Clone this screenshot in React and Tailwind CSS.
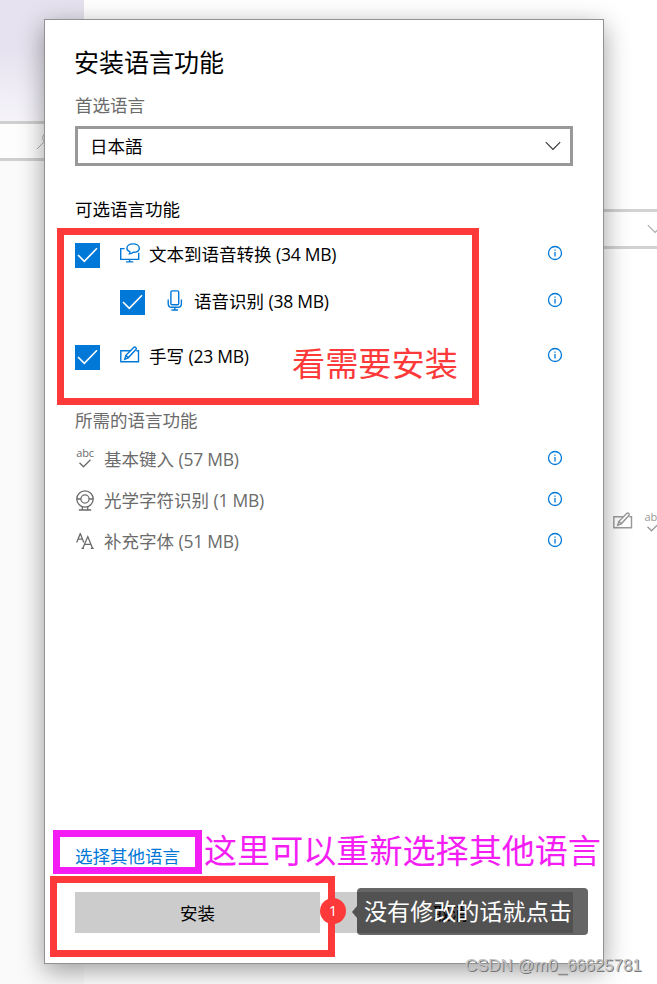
import React from "react";
import clsx from "clsx";

const optionalFeatures = [
  { title: "文本到语音转换", size: "(34 MB)", icon: SpeechIcon, className: "mt-[21px]" },
  { title: "语音识别", size: "(38 MB)", icon: MicIcon, className: "mt-[21px] pl-[45px]" },
  { title: "手写", size: "(23 MB)", icon: PenIcon, className: "mt-[29px]" },
];

const requiredFeatures = [
  { title: "基本键入", size: "(57 MB)", icon: TypingIcon },
  { title: "光学字符识别", size: "(1 MB)", icon: CameraIcon },
  { title: "补充字体", size: "(51 MB)", icon: FontsIcon },
];

function SpeechIcon() {
  return (
    <svg width="20" height="20" viewBox="0 0 20 20" fill="none" stroke="currentColor" strokeWidth="1.4">
      <path d="M4.600 5.600H.7v10.800h18V9.800M9.600 16.500v2.300M6 18.900h7.300" />
      <path d="M9.400 10.900c.5-.9.6-1.400.4-2.300C7.900 7.900 6.900 6.800 6.900 5.200c0-2.600 2.700-4.300 6.200-4.300s6.200 1.700 6.200 4.300-2.700 4.100-5.900 4.100c-1.200 1-2.400 1.600-4 1.600Z" />
    </svg>
  );
}

function MicIcon() {
  return (
    <svg width="16" height="21" viewBox="0 0 16 21" fill="none" stroke="currentColor" strokeWidth="1.4">
      <rect x="3.9" y=".9" width="7.8" height="13.8" rx="1.2" />
      <path d="M1.200 9.500v4.200c0 2.300 1.300 3.500 3.500 3.500h6.200c2.200 0 3.500-1.200 3.500-3.500V9.500M7.800 17.200v2.600M4.500 20h6.600" />
    </svg>
  );
}

function PenIcon() {
  return (
    <svg width="20" height="18" viewBox="0 0 20 18" fill="none" stroke="currentColor" strokeWidth="1.4">
      <path d="M10.500 4.700H.8v11h17.700v-11h-2.200" />
      <path d="m4.700 13.300 1.200-4L13.700 1.500c1.300-1.200 3.400.6 2.200 2L8.200 11.800Zm1.200-4 2.300 2.500" />
    </svg>
  );
}

function TypingIcon() {
  return (
    <span className="flex flex-col items-center">
      <span className="-mt-1 font-['Open_Sans',sans-serif] text-[11px] leading-[12px] tracking-[-0.2px]">abc</span>
      <svg width="14" height="9" viewBox="0 0 14 9" fill="none" stroke="currentColor" strokeWidth="1.3">
        <path d="m1.500 3.800 4 4L12.500.8" />
      </svg>
    </span>
  );
}

function CameraIcon() {
  return (
    <svg width="18" height="21" viewBox="0 0 18 21" fill="none" stroke="currentColor" strokeWidth="1.3">
      <circle cx="9" cy="9" r="8.200" />
      <circle cx="9" cy="9" r="4.100" />
      <path d="M.8 9h4.100M13.100 9h4.100M6.300 17v2.800M11.700 17v2.800M2.800 20h12.400" />
    </svg>
  );
}

function FontsIcon() {
  return (
    <svg width="18" height="18" viewBox="0 0 18 18" fill="none" stroke="currentColor" strokeWidth="1.3">
      <path d="M.7 9.500 4.300.5l3.500 9M2 6.200h4.700" />
      <path d="m6.800 15.300 5-11.700 4.700 11.700M8.600 11.300h6.300M5.500 15.300h2.600M14.800 15.300h3" />
    </svg>
  );
}

function InfoIcon() {
  return (
    <svg className="text-[#0078d7]" width="16" height="16" viewBox="0 0 16 16" fill="none" stroke="currentColor" strokeWidth="1.3">
      <circle cx="8" cy="8" r="6.500" />
      <path d="M8 6.900v4.600M8 4.500v1.300" />
    </svg>
  );
}

function ChevronIcon() {
  return (
    <svg width="16" height="10" viewBox="0 0 16 10" fill="none" stroke="currentColor" strokeWidth="1.1">
      <path d="m.8 1.200 7.200 7.200 7.200-7.200" />
    </svg>
  );
}

function Checkbox() {
  return (
    <span className="flex size-[25px] shrink-0 items-center justify-center bg-[#0078d7] text-white">
      <svg width="21" height="16" viewBox="0 0 21 16" fill="none" stroke="currentColor" strokeWidth="1.6">
        <path d="m1 8 6.300 6.300L20 1.300" />
      </svg>
    </span>
  );
}

function FeatureName({ title, size }) {
  return (
    <span className="whitespace-nowrap">
      {title} <span className="tracking-[-0.25px]">{size}</span>
    </span>
  );
}

function SettingsPage() {
  return (
    <div className="flex h-full">
      <div className="flex w-[84px] flex-col bg-[#fafafa]">
        <div className="h-[121px] bg-linear-to-b from-[#e6e2ef] from-40% to-[#f6f4fa]" />
        <div className="flex h-10 items-center justify-end border-y-[3px] border-[#cfcfcf] bg-[#fdfdfd] pr-[30px]">
          <svg className="text-[#b0b0b0]" width="18" height="18" viewBox="0 0 18 18" fill="none" stroke="currentColor">
            <circle cx="12" cy="6" r="5.300" />
            <path d="m8.300 9.700-7.500 7.500" />
          </svg>
        </div>
      </div>
      <div className="flex flex-1 flex-col pt-[209px]">
        <div className="flex h-10 items-center justify-end border-y-[3px] border-[#d2d2d2] text-[#aaa]">
          <span className="-mr-[6px]">
            <ChevronIcon />
          </span>
        </div>
        <div className="-mr-[5px] mt-[263px] flex items-start justify-end gap-[11px] text-[#999]">
          <PenIcon />
          <span className="mt-[3px]">
            <TypingIcon />
          </span>
        </div>
      </div>
    </div>
  );
}

function InstallDialog() {
  return (
    <div className="absolute left-[44px] top-[19px] flex h-[945px] w-[560px] flex-col border border-[#929292] bg-white px-[30px] pb-[30px] pt-[25px] text-[17.5px] leading-6 shadow-[0_7px_24px_rgba(0,0,0,0.38)]">
      <h1 className="-ml-px text-[25px] leading-[34px]">安装语言功能</h1>
      <div className="mt-[14px] text-[#6b6b6b]">首选语言</div>
      <div className="mt-[9px] flex h-10 shrink-0 items-center justify-between border-[3px] border-[#999] pl-3 pr-[9px]">
        <span>日本語</span>
        <span className="text-[#333]">
          <ChevronIcon />
        </span>
      </div>

      <h2 className="mt-[31px]">可选语言功能</h2>
      {optionalFeatures.map((item) => (
        <div key={item.title} className={clsx("flex h-[26px] shrink-0 items-center", item.className)}>
          <Checkbox />
          <span className="mb-1 ml-5 flex w-[20px] justify-center text-[#0078d7]">
            <item.icon />
          </span>
          <span className="mb-0.5 ml-[9px] flex-1">
            <FeatureName title={item.title} size={item.size} />
          </span>
          <span className="mb-1 mr-[10px]">
            <InfoIcon />
          </span>
        </div>
      ))}

      <h2 className="mb-[7px] mt-[38px] text-[#6b6b6b]">所需的语言功能</h2>
      {requiredFeatures.map((item) => (
        <div key={item.title} className="flex h-[41px] shrink-0 items-center text-[#6b6b6b]">
          <span className="flex w-5 justify-center">
            <item.icon />
          </span>
          <span className="mb-0.5 ml-[9px] flex-1">
            <FeatureName title={item.title} size={item.size} />
          </span>
          <span className="mb-1 mr-[10px]">
            <InfoIcon />
          </span>
        </div>
      ))}

      <a className="mb-6 mt-auto text-[#0078d7]">选择其他语言</a>
      <div className="flex h-[41px] shrink-0 gap-2">
        <button className="flex-1 bg-[#ccc]">安装</button>
        <button className="flex-1 bg-[#ccc]">取消</button>
      </div>
    </div>
  );
}

function Annotations() {
  return (
    <>
      <div className="absolute left-[57px] top-[228px] h-[177px] w-[422px] border-[7px] border-[#fd3939]" />
      <div className="absolute left-[292px] top-[344px] whitespace-nowrap text-[33.2px] leading-10 text-[#fd3939]">看需要安装</div>
      <div className="absolute left-[53px] top-[830px] h-[44px] w-[149px] border-[7px] border-[#f41ef4]" />
      <div className="absolute left-[204px] top-[831px] whitespace-nowrap text-[33.1px] leading-10 text-[#f41ef4]">这里可以重新选择其他语言</div>
      <div className="absolute left-[50px] top-[876px] h-[81px] w-[285px] border-[7px] border-[#fd3939]" />
      <div className="absolute left-[320px] top-[898px] flex size-[26px] items-center justify-center rounded-full bg-[#fd3939] pb-0.5 font-['Open_Sans',sans-serif] text-[15px] text-white">
        1
      </div>
      <div className="absolute left-[352px] top-[888px] flex items-center">
        <svg width="5" height="12" viewBox="0 0 5 12">
          <path d="M5 0v12L0 6Z" fill="#000" fillOpacity="0.6" />
        </svg>
        <div className="flex h-[47px] w-[231px] items-center whitespace-nowrap rounded bg-black/60 pl-[7px] text-[23.1px] text-white">
          没有修改的话就点击
        </div>
      </div>
      <div className="absolute left-[465px] top-[956px] whitespace-nowrap font-['Liberation_Sans',sans-serif] text-[16.8px] leading-5 text-[#c4c4c4] [text-shadow:1px_1px_0_#777]">
        CSDN @m0_66625781
      </div>
    </>
  );
}

export default function App() {
  return (
    <div className="relative h-[984px] w-[657px] overflow-hidden bg-white font-['Open_Sans','Noto_Sans_CJK_SC',sans-serif] text-black">
      <SettingsPage />
      <InstallDialog />
      <Annotations />
    </div>
  );
}
